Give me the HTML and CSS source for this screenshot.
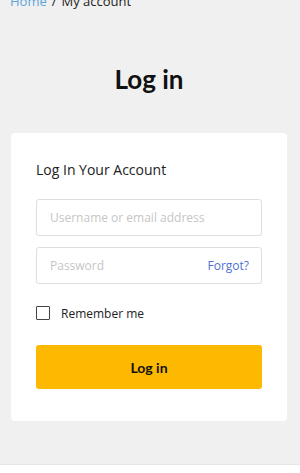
FILE: index.html
```html
<!DOCTYPE html>
<html lang="en">
<head>
<meta charset="utf-8">
<title>Log in</title>
<link rel="stylesheet" href="styles.css">
</head>
<body>
<main class="page">
  <nav class="breadcrumb"><a class="crumb-link" href="#">Home</a><span class="sep">/</span><span class="current">My account</span></nav>
  <h1 class="title">Log in</h1>
  <section class="card">
    <h2 class="card-title">Log In Your Account</h2>
    <form class="form">
      <div class="field"><input class="input" type="text" placeholder="Username or email address"></div>
      <div class="field"><input class="input" type="password" placeholder="Password"><a class="forgot" href="#">Forgot?</a></div>
      <label class="remember"><span class="checkbox"></span><span class="remember-text">Remember me</span></label>
      <button class="btn" type="button">Log in</button>
    </form>
  </section>
</main>
<footer class="footer"></footer>
</body>
</html>
```
FILE: styles.css
```css
* { box-sizing: border-box; }
html, body { margin: 0; padding: 0; }
body {
  background: #f0f0f0;
  font-family: "Open Sans", "Noto Sans", sans-serif;
  color: #222;
}
.page {
  padding: 0 13px 43px 11px;
  border-bottom: 1px solid #e6e6e6;
}
.breadcrumb {
  margin-top: -7px;
  font-size: 13px;
  line-height: 17px;
  color: #222;
}
.crumb-link { color: #5aa6dc; text-decoration: none; margin-left: -1px; }
.sep { margin: 0 5px; }
.title {
  margin: 0;
  padding-top: 54px;
  text-align: center;
  font-family: Lato, "Open Sans", sans-serif;
  font-weight: 700;
  font-size: 26px;
  line-height: 30px;
  color: #111;
}
.card {
  margin-top: 39px;
  background: #fff;
  border-radius: 4px;
  padding: 27px 25px 32px;
}
.card-title {
  margin: 0;
  font-weight: 400;
  font-size: 14px;
  line-height: 20px;
  color: #222;
}
.form { display: flex; flex-direction: column; margin-top: 19px; }
.field {
  position: relative;
  height: 37px;
  border: 1px solid #dedede;
  border-radius: 3px;
  display: flex;
  align-items: center;
  padding: 0 12px 0 13px;
  margin-bottom: 11px;
}
.input {
  flex: 1;
  min-width: 0;
  border: 0;
  outline: 0;
  background: transparent;
  font-family: inherit;
  font-size: 12px;
  color: #222;
  padding: 0;
}
.input::placeholder { color: #c6c6c6; }
.forgot { color: #4f6fd6; text-decoration: none; font-size: 12px; }
.remember {
  display: flex;
  align-items: center;
  margin-top: 11px;
  height: 14px;
  font-size: 12px;
  color: #222;
}
.checkbox {
  width: 14px;
  height: 14px;
  border: 1.5px solid #444;
  border-radius: 1px;
  background: #fff;
  margin-right: 11px;
}
.btn {
  margin-top: 25px;
  height: 44px;
  border: 0;
  border-radius: 3px;
  background: #fdb800;
  font-family: Lato, "Open Sans", sans-serif;
  font-weight: 700;
  font-size: 14px;
  color: #111;
}
.footer { background: #fff; height: 20px; }
```
